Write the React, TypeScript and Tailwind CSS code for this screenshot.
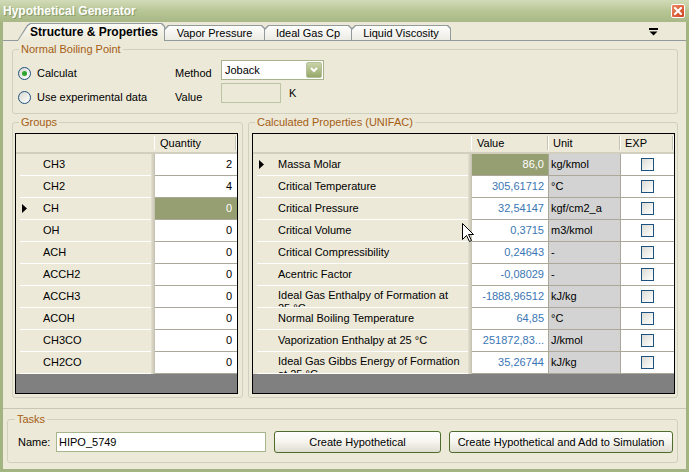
import React from 'react';

const groups = [
  { name: 'CH3', qty: '2' },
  { name: 'CH2', qty: '4' },
  { name: 'CH', qty: '0', selected: true },
  { name: 'OH', qty: '0' },
  { name: 'ACH', qty: '0' },
  { name: 'ACCH2', qty: '0' },
  { name: 'ACCH3', qty: '0' },
  { name: 'ACOH', qty: '0' },
  { name: 'CH3CO', qty: '0' },
  { name: 'CH2CO', qty: '0' },
];

const properties = [
  { name: ['Massa Molar'], value: '86,0', unit: 'kg/kmol', selected: true },
  { name: ['Critical Temperature'], value: '305,61712', unit: '°C' },
  { name: ['Critical Pressure'], value: '32,54147', unit: 'kgf/cm2_a' },
  { name: ['Critical Volume'], value: '0,3715', unit: 'm3/kmol' },
  { name: ['Critical Compressibility'], value: '0,24643', unit: '-' },
  { name: ['Acentric Factor'], value: '-0,08029', unit: '-' },
  { name: ['Ideal Gas Enthalpy of Formation at', '25 °C'], value: '-1888,96512', unit: 'kJ/kg' },
  { name: ['Normal Boiling Temperature'], value: '64,85', unit: '°C' },
  { name: ['Vaporization Enthalpy at 25 °C'], value: '251872,83...', unit: 'J/kmol' },
  { name: ['Ideal Gas Gibbs Energy of Formation', 'at 25 °C'], value: '35,26744', unit: 'kJ/kg' },
];

// small black "current row" marker of the grid row header
const RowArrow = () => (
  <svg width="5" height="9" viewBox="0 0 5 9">
    <path d="M0 0 L5 4.5 L0 9 Z" fill="#000" />
  </svg>
);

const Radio = ({ checked }: { checked?: boolean }) => (
  <span className="w-[13px] h-[13px] shrink-0 rounded-full border border-[#1c5180] bg-gradient-to-br from-[#d8d8d0] to-white flex items-center justify-center">
    {checked && <span className="w-[5px] h-[5px] rounded-full bg-[#2ea52e]" />}
  </span>
);

const CheckBox = () => (
  <span className="w-[13px] h-[13px] border border-[#1c5180] bg-gradient-to-br from-[#dcdcd6] to-white" />
);

// short vertical divider between column headers
const HeaderSep = () => (
  <div className="flex h-[14px]">
    <div className="w-px bg-[#c7c3b3]" />
    <div className="w-px bg-white" />
  </div>
);

const NameCell = ({ width, slot, active, children, top }: { width: string; slot: string; active?: boolean; children: React.ReactNode; top?: boolean }) => (
  <div className={`${width} h-[22px] flex bg-[#ece9d8]`}>
    <div className={`flex-1 ml-[4px] border-b border-white flex overflow-hidden ${top ? 'items-start' : 'items-center'}`}>
      <div className={`${slot} h-[21px] shrink-0 pl-[2px] flex items-center`}>{active && <RowArrow />}</div>
      <div className={top ? 'pt-[3px]' : ''}>{children}</div>
    </div>
    <div className="w-[4px] bg-gradient-to-r from-[#e4e1d0] to-[#c4c0af]" />
  </div>
);

function Tab({ label, active, width }: { label: string; active?: boolean; width: string }) {
  if (active) {
    return (
      <div className={`relative z-10 ${width} h-[18px] mb-[-1px] pt-px px-px bg-[#919b9c] [clip-path:polygon(0_100%,10px_2px,13px_0,calc(100%_-_3px)_0,100%_3px,100%_100%)]`}>
        <div className="h-full flex items-center justify-center pl-[6px] text-[12px] font-bold bg-gradient-to-b from-[#fbfaf5] to-[#ece9d8] [clip-path:polygon(0_100%,10px_2px,13px_0,calc(100%_-_3px)_0,100%_3px,100%_100%)]">
          {label}
        </div>
      </div>
    );
  }
  return (
    <div className={`-ml-px ${width} h-[15px] pt-px px-px bg-[#919b9c] [clip-path:polygon(0_100%,0_4px,4px_0,calc(100%_-_3px)_0,100%_3px,100%_100%)]`}>
      <div className="h-full flex items-center justify-center bg-gradient-to-b from-[#fefefd] to-[#ecebe4] [clip-path:polygon(0_100%,0_4px,4px_0,calc(100%_-_3px)_0,100%_3px,100%_100%)]">
        {label}
      </div>
    </div>
  );
}

export default function App() {
  return (
    <div className="relative w-[689px] h-[472px] overflow-hidden flex flex-col bg-[#a3b483] text-[11px] leading-[13px] text-black [font-family:'Liberation_Sans',Arial,sans-serif]">
      {/* Title bar */}
      <div className="h-[22px] shrink-0 flex items-center justify-between pl-[3px] pr-[4px] bg-gradient-to-b from-[#d2dbb8] via-[#b8c696] to-[#a8b886]">
        <span className="text-[12px] font-bold text-white [text-shadow:1px_1px_0_#8c9c6a]">Hypothetical Generator</span>
        <button className="w-[14px] h-[14px] rounded-[2px] border border-white bg-gradient-to-br from-[#ec8a62] to-[#cf3f1c] flex items-center justify-center">
          <svg width="8" height="8" viewBox="0 0 8 8">
            <path d="M1 1 L7 7 M7 1 L1 7" stroke="#fff" strokeWidth="2" strokeLinecap="square" />
          </svg>
        </button>
      </div>

      <div className="flex-1 mx-[3px] mb-[3px] bg-[#ece9d8] flex flex-col">
        {/* Tab strip */}
        <div className="h-[19px] shrink-0 flex items-end pl-[14px] pr-[28px] border-b border-[#919b9c]">
          <Tab label="Structure & Properties" active width="w-[148px]" />
          <Tab label="Vapor Pressure" width="w-[101px]" />
          <Tab label="Ideal Gas Cp" width="w-[88px]" />
          <Tab label="Liquid Viscosity" width="w-[100px]" />
          <svg className="ml-auto self-end mb-[4px]" width="9" height="8" viewBox="0 0 9 8">
            <rect x="0" y="0" width="9" height="2" fill="#000" />
            <path d="M0.5 3.5 H8.5 L4.5 7.5 Z" fill="#000" />
          </svg>
        </div>

        {/* Tab page */}
        <div className="h-[368px] shrink-0 pt-[2px] border-b border-[#c9c6b6]">
          <fieldset className="ml-[9px] mr-[8px] h-[71px] border border-[#d0d0bf] rounded-[3px]">
            <legend className="ml-[6px] px-[2px] text-[#a55d14]">Normal Boiling Point</legend>
            <div className="flex">
              <div className="w-[157px] ml-[5px] mt-[9px] flex flex-col gap-[8px]">
                <div className="h-[16px] flex items-center gap-[6px]">
                  <Radio checked />
                  <span>Calculat</span>
                </div>
                <div className="h-[16px] flex items-center gap-[6px]">
                  <Radio />
                  <span>Use experimental data</span>
                </div>
              </div>
              <div className="w-[46px] mt-[9px] flex flex-col gap-[8px]">
                <div className="h-[16px] flex items-center">Method</div>
                <div className="h-[16px] flex items-center">Value</div>
              </div>
              <div className="mt-[4px] flex flex-col gap-[3px]">
                <div className="w-[103px] h-[20px] border border-[#a7b38c] bg-white flex items-center pl-[3px] pr-px">
                  <span className="flex-1">Joback</span>
                  <span className="w-[16px] h-[16px] rounded-[2px] border border-[#b4c09a] bg-gradient-to-b from-[#c9d4a8] to-[#97a86a] flex items-center justify-center">
                    <svg width="8" height="6" viewBox="0 0 8 6">
                      <path d="M1 1 L4 4 L7 1" stroke="#fff" strokeWidth="2" fill="none" />
                    </svg>
                  </span>
                </div>
                <div className="h-[20px] flex items-center">
                  <div className="w-[60px] h-[20px] border border-[#bcc4a4] bg-[#ece9d8]" />
                  <span className="ml-[8px]">K</span>
                </div>
              </div>
            </div>
          </fieldset>

          <div className="flex mt-[2px] ml-[9px] mr-[8px] gap-[5px] h-[282px]">
            {/* Groups */}
            <fieldset className="w-[231px] h-[282px] border border-[#d0d0bf] rounded-[3px]">
              <legend className="ml-[6px] px-[2px] text-[#a55d14]">Groups</legend>
              <div className="ml-[2px] mt-[4px] w-[223px] h-[261px] border border-black flex flex-col">
                <div className="h-[20px] flex border-b-2 border-[#d3cfbf] bg-[#ece9d8]">
                  <div className="w-[139px] flex items-center justify-end">
                    <div className="h-[14px] w-px bg-white" />
                  </div>
                  <div className="w-[82px] flex items-center pl-[5px]">
                    <span className="flex-1">Quantity</span>
                    <HeaderSep />
                  </div>
                </div>
                {groups.map((g) => (
                  <div key={g.name} className="flex h-[22px]">
                    <NameCell width="w-[139px]" slot="w-[23px]" active={g.selected}>
                      {g.name}
                    </NameCell>
                    <div className={`w-[82px] h-[22px] border-b border-[#aca899] flex items-center justify-end pr-[5px] ${g.selected ? 'bg-[#969f72] text-white' : 'bg-white'}`}>
                      {g.qty}
                    </div>
                  </div>
                ))}
                <div className="flex-1 bg-[#808080]" />
              </div>
            </fieldset>

            {/* Calculated properties */}
            <fieldset className="w-[430px] h-[282px] border border-[#d0d0bf] rounded-[3px]">
              <legend className="ml-[6px] px-[2px] text-[#a55d14]">Calculated Properties (UNIFAC)</legend>
              <div className="ml-[3px] mt-[4px] w-[423px] h-[261px] border border-black flex flex-col">
                <div className="h-[20px] flex border-b-2 border-[#d3cfbf] bg-[#ece9d8]">
                  <div className="w-[219px] flex items-center justify-end">
                    <div className="h-[14px] w-px bg-white" />
                  </div>
                  <div className="w-[77px] flex items-center pl-[5px]">
                    <span className="flex-1">Value</span>
                    <HeaderSep />
                  </div>
                  <div className="w-[72px] flex items-center pl-[4px]">
                    <span className="flex-1">Unit</span>
                    <HeaderSep />
                  </div>
                  <div className="w-[53px] flex items-center pl-[4px]">
                    <span className="flex-1">EXP</span>
                    <HeaderSep />
                  </div>
                </div>
                {properties.map((p) => (
                  <div key={p.name.join(' ')} className="flex h-[22px]">
                    <NameCell width="w-[219px]" slot="w-[21px]" active={p.selected} top={p.name.length > 1}>
                      {p.name.map((line, i) => (
                        <div key={i}>{line}</div>
                      ))}
                    </NameCell>
                    <div className={`w-[77px] h-[22px] border-b border-r border-[#aca899] flex items-center justify-end pr-[4px] ${p.selected ? 'bg-[#969f72] text-white' : 'bg-white text-[#3a76b4]'}`}>
                      {p.value}
                    </div>
                    <div className="w-[72px] h-[22px] border-b border-r border-[#aca899] bg-[#d3d3d3] flex items-center pl-[2px]">
                      {p.unit}
                    </div>
                    <div className="w-[53px] h-[22px] border-b border-[#aca899] bg-white flex items-center justify-center">
                      <CheckBox />
                    </div>
                  </div>
                ))}
                <div className="flex-1 bg-[#808080]" />
              </div>
            </fieldset>
          </div>
        </div>

        {/* Tasks */}
        <fieldset className="mt-[4px] ml-[4px] w-[671px] h-[50px] border border-[#d0d0bf] rounded-[3px]">
          <legend className="ml-[7px] px-[2px] text-[#a55d14]">Tasks</legend>
          <div className="mt-[5px] h-[22px] flex items-center pl-[10px]">
            <span className="w-[38px]">Name:</span>
            <div className="w-[210px] h-[20px] border border-[#a7b58c] bg-white flex items-center pl-[2px]">HIPO_5749</div>
            <button className="ml-[8px] w-[167px] h-[22px] rounded-[3px] border border-[#4e6b2e] bg-gradient-to-b from-white via-[#f5f4ee] to-[#dfddd1]">
              Create Hypothetical
            </button>
            <button className="ml-[8px] w-[224px] h-[22px] rounded-[3px] border border-[#4e6b2e] bg-gradient-to-b from-white via-[#f5f4ee] to-[#dfddd1]">
              Create Hypothetical and Add to Simulation
            </button>
          </div>
        </fieldset>
      </div>

      {/* mouse pointer captured in the screenshot */}
      <svg className="absolute left-[462px] top-[223px]" width="13" height="20" viewBox="0 0 13 20">
        <path d="M0.5 0.5 V16.5 L4.5 12.5 L7.5 18.5 L9.5 17.5 L6.5 11.5 H11.5 Z" fill="#fff" stroke="#000" strokeWidth="1" />
      </svg>
    </div>
  );
}
